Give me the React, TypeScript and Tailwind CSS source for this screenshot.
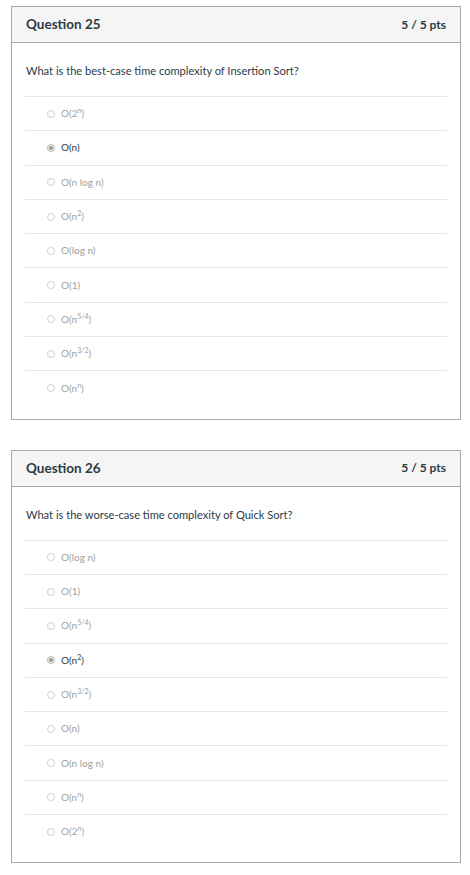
import React from "react";

type Opt = { label: React.ReactNode; selected?: boolean };

const sup = (base: string, s: string, tail = ")") => (
  <>
    {base}
    <sup className="text-[7px] relative -top-[4px]">{s}</sup>
    {tail}
  </>
);

const q25: Opt[] = [
  { label: sup("O(2", "n") },
  { label: "O(n)", selected: true },
  { label: "O(n log n)" },
  { label: sup("O(n", "2") },
  { label: "O(log n)" },
  { label: "O(1)" },
  { label: sup("O(n", "5/4") },
  { label: sup("O(n", "3/2") },
  { label: sup("O(n", "n") },
];

const q26: Opt[] = [
  { label: "O(log n)" },
  { label: "O(1)" },
  { label: sup("O(n", "5/4") },
  { label: sup("O(n", "2"), selected: true },
  { label: sup("O(n", "3/2") },
  { label: "O(n)" },
  { label: "O(n log n)" },
  { label: sup("O(n", "n") },
  { label: sup("O(2", "n") },
];

function Radio({ selected }: { selected?: boolean }) {
  return (
    <span
      className={`flex items-center justify-center w-[8px] h-[8px] rounded-full border ${
        selected ? "border-[#b5b5b5] bg-[#f4f4f4]" : "border-[#d0d0d0] bg-white"
      }`}
    >
      {selected && <span className="w-[4px] h-[4px] rounded-full bg-[#9a9a9a]" />}
    </span>
  );
}

function Card({ num, question, opts }: { num: number; question: string; opts: Opt[] }) {
  return (
    <div className="ml-[11px] w-[450px] border border-[#a9a9a9] bg-white">
      <div className="h-[36px] bg-[#f5f5f5] border-b border-[#a9a9a9] flex items-center justify-between px-[14px]">
        <span className="text-[13.5px] font-bold text-[#2d3b45]">Question {num}</span>
        <span className="text-[12px] font-bold text-[#2d3b45]">5 / 5 pts</span>
      </div>
      <div className="px-[13px] pt-[20px] pb-[14px]">
        <div className="text-[11.1px] leading-[16px] text-[#2d3b45] pl-[1px] mb-[17px]">{question}</div>
        {opts.map((o, i) => (
          <div key={i} className="h-[34.3px] border-t border-[#e6e6e6] flex items-center pl-[22px]">
            <Radio selected={o.selected} />
            <span
              className={`ml-[6px] text-[10px] ${o.selected ? "text-[#2d3b45]" : "text-[#a0a0a0]"}`}
            >
              {o.label}
            </span>
          </div>
        ))}
      </div>
    </div>
  );
}

export default function App() {
  return (
    <div className="w-[470px] h-[875px] bg-white pt-[6px]" style={{ fontFamily: "Lato, 'Noto Sans', sans-serif" }}>
      <Card num={25} question="What is the best-case time complexity of Insertion Sort?" opts={q25} />
      <div className="h-[30px]" />
      <Card num={26} question="What is the worse-case time complexity of Quick Sort?" opts={q26} />
    </div>
  );
}
